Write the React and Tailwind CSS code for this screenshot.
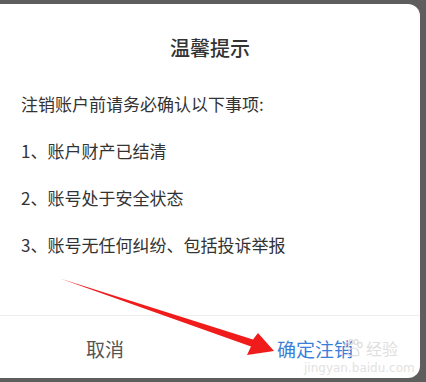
export default function App() {
  const font = { fontFamily: '"Noto Sans CJK SC", "Noto Sans", sans-serif' };
  return (
    <div className="w-[426px] h-[382px] bg-[#5e5e5e] pt-[4px] pb-[4px] pr-[6px] overflow-hidden" style={font}>
      <div className="relative w-[420px] h-[374px] bg-white rounded-r-[12px] flex flex-col">
        <div className="h-[76px] pt-[30px] text-center text-[20px] leading-[28px] text-[#333333] font-medium">温馨提示</div>
        <div className="pl-[21px] text-[17px] leading-[47px] text-[#333333]">
          <div>注销账户前请务必确认以下事项:</div>
          <div>1、账户财产已结清</div>
          <div>2、账号处于安全状态</div>
          <div>3、账号无任何纠纷、包括投诉举报</div>
        </div>
        <div className="flex-1" />
        <div className="h-[63px] border-t border-[#eeeeee] flex pt-[4px]">
          <div className="flex-1 flex items-center justify-center text-[19px] text-[#555555]">取消</div>
          <div className="flex-1 flex items-center justify-center text-[19px] text-[#3d7fd8]">确定注销</div>
        </div>
        <div className="absolute left-[342px] top-[334px] text-[16px] leading-[20px] text-[#e0e0e0] flex items-center gap-[2px]">
          <svg width="22" height="18" viewBox="0 0 22 18" fill="none" stroke="#dcdcdc" strokeWidth="1.2">
            <ellipse cx="5" cy="6" rx="2" ry="2.6" />
            <ellipse cx="9" cy="3" rx="2" ry="2.4" />
            <ellipse cx="14" cy="3" rx="2" ry="2.4" />
            <ellipse cx="18" cy="6" rx="2" ry="2.6" />
            <path d="M6 15c0-4 3-6 5.5-6s5.5 2 5.5 6c0 2-2 2-5.5 1.5C8 17 6 17 6 15z" />
          </svg>
          <span>经验</span>
        </div>
        <div className="absolute left-[304px] top-[357px] text-[12px] leading-[14px] text-[#e2e2e2]" style={{ fontFamily: '"DejaVu Sans", sans-serif' }}>jingyan.baidu.com</div>
        <svg className="absolute left-0 top-0" width="420" height="374" viewBox="0 4 420 374">
          <polygon points="60,278.5 253,339.5 258,333 274,351 247,355 251,346.5" fill="#f01c1c" />
        </svg>
      </div>
    </div>
  );
}
